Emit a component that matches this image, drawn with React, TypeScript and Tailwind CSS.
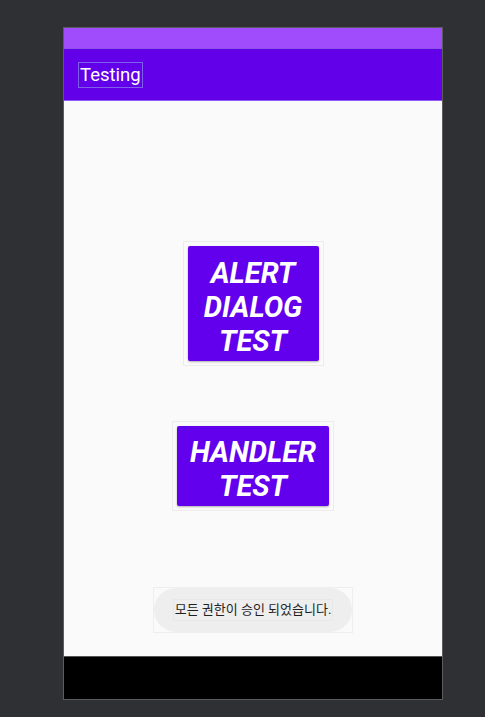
import React from 'react';

const roboto = { fontFamily: 'Roboto, "Noto Sans CJK KR", sans-serif' };

const BigButton: React.FC<{ lines: string[]; width: string; height: string }> = ({ lines, width, height }) => (
  // outer box is the faint layout-bounds outline around the button
  <div className="border border-[#ececec] p-[4px]">
    <div
      className={`${width} ${height} bg-[#6200ee] rounded-[2px] shadow-[0_1px_2px_rgba(0,0,0,0.3)] flex flex-col items-center justify-center pt-[6px] text-white font-bold italic text-[29px] leading-[34px]`}
    >
      {lines.map((l) => (
        <span key={l}>{l}</span>
      ))}
    </div>
  </div>
);

export default function App() {
  return (
    <div className="w-[485px] h-[717px] bg-[#2f3033] pt-[27px] pl-[63px]" style={roboto}>
      <div className="w-[380px] h-[673px] border border-[#5c5c5e] flex flex-col">
        {/* status bar */}
        <div className="h-[21px] bg-[#a04cfc] border-b border-[#8a55e6]" />
        {/* toolbar */}
        <div className="h-[52px] bg-[#6200ea] flex items-center pl-[14px] border-b border-[#8f5cf2]">
          <span className="text-white text-[18.5px] leading-[24px] border border-[#8060e8] px-[1px]">Testing</span>
        </div>
        {/* content */}
        <div className="flex-1 bg-[#fafafa] flex flex-col items-center">
          <div className="h-[140px]" />
          <BigButton lines={['ALERT', 'DIALOG', 'TEST']} width="w-[131px]" height="h-[115px]" />
          <div className="h-[55px]" />
          <BigButton lines={['HANDLER', 'TEST']} width="w-[152px]" height="h-[80px]" />
          <div className="h-[76px]" />
          <div className="border border-[#eeeeee]">
            <div className="w-[198px] h-[44px] rounded-full bg-[#eeeeee] flex items-center justify-center">
              <span className="text-[13px] text-[#1f1f1f] border border-[#e8e8e8] px-[1px]">모든 권한이 승인 되었습니다.</span>
            </div>
          </div>
        </div>
        {/* navigation bar */}
        <div className="h-[43px] bg-black border-t border-[#555]" />
      </div>
    </div>
  );
}
